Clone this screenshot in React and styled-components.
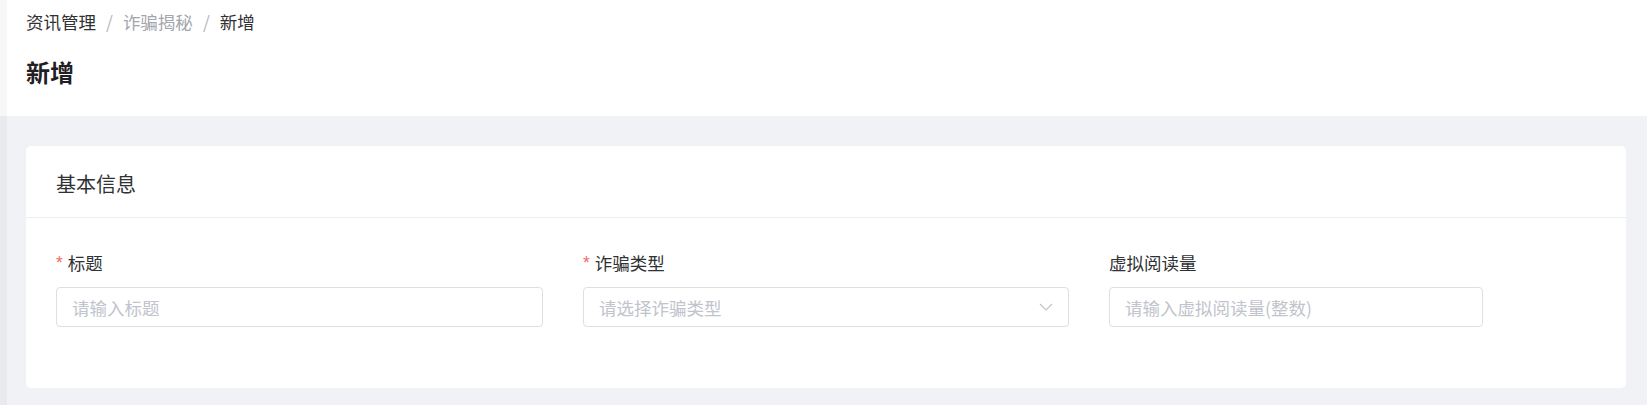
import React from "react";
import styled, { createGlobalStyle } from "styled-components";

const GlobalStyle = createGlobalStyle`
  html, body {
    margin: 0;
    padding: 0;
    background: #f0f2f5;
    font-family: "Noto Sans CJK SC", "Liberation Sans", sans-serif;
  }
  * {
    box-sizing: border-box;
  }
`;

const fields = [
  { label: "标题", required: true, placeholder: "请输入标题", width: 487 },
  { label: "诈骗类型", required: true, placeholder: "请选择诈骗类型", width: 486, select: true },
  { label: "虚拟阅读量", required: false, placeholder: "请输入虚拟阅读量(整数)", width: 374 },
];

const Page = styled.div`
  position: relative;
  min-height: 405px;
  background: #f0f2f5;

  &::before {
    content: "";
    position: absolute;
    left: 0;
    top: 0;
    bottom: 0;
    width: 7px;
    background: rgba(0, 0, 0, 0.03);
  }
`;

const Header = styled.div`
  background: #fff;
  height: 116px;
  padding: 10px 26px 0;
  display: flex;
  flex-direction: column;
  gap: 22px;
`;

const Crumbs = styled.div`
  display: flex;
  align-items: center;
  font-size: 17.5px;
  line-height: 24px;
`;

const Crumb = styled.span`
  color: ${(p) => (p.$muted ? "#a3a6ad" : "#303133")};
`;

const Sep = styled.span`
  color: #b4b7be;
  margin: 0 10px;
`;

const Title = styled.h1`
  margin: 0;
  font-size: 24px;
  line-height: 32px;
  font-weight: 700;
  color: #1f2023;
`;

const Body = styled.div`
  padding: 30px 21px 18px 26px;
`;

const Card = styled.div`
  background: #fff;
  border-radius: 5px;
`;

const CardHead = styled.div`
  height: 72px;
  padding: 3px 30px 0;
  display: flex;
  align-items: center;
  border-bottom: 1px solid #ebeef3;
  font-size: 20px;
  color: #303133;
`;

const FormRow = styled.div`
  display: flex;
  gap: 40px;
  padding: 33px 30px 61px;
`;

const Field = styled.div`
  width: ${(p) => p.$w}px;
  display: flex;
  flex-direction: column;
  gap: 12px;
`;

const Label = styled.label`
  display: flex;
  align-items: center;
  font-size: 17.5px;
  line-height: 24px;
  color: #303133;
`;

const Star = styled.span`
  color: #f56c6c;
  margin-right: 5px;
  font-family: "Liberation Sans", sans-serif;
`;

const Box = styled.div`
  height: 40px;
  border: 1px solid #dcdfe6;
  border-radius: 4px;
  padding: 0 15px;
  display: flex;
  align-items: center;
  justify-content: space-between;
  font-size: 17.5px;
  color: #c0c4cc;
`;

const Chevron = () => (
  <svg width="14" height="8" viewBox="0 0 14 8" fill="none">
    <path d="M1 1l6 6 6-6" stroke="#c0c4cc" strokeWidth="1.2" />
  </svg>
);

export default function App() {
  return (
    <>
      <GlobalStyle />
      <Page>
        <Header>
          <Crumbs>
            <Crumb>资讯管理</Crumb>
            <Sep>/</Sep>
            <Crumb $muted>诈骗揭秘</Crumb>
            <Sep>/</Sep>
            <Crumb>新增</Crumb>
          </Crumbs>
          <Title>新增</Title>
        </Header>
        <Body>
          <Card>
            <CardHead>基本信息</CardHead>
            <FormRow>
              {fields.map((f) => (
                <Field key={f.label} $w={f.width}>
                  <Label>
                    {f.required && <Star>*</Star>}
                    {f.label}
                  </Label>
                  <Box>
                    <span>{f.placeholder}</span>
                    {f.select && <Chevron />}
                  </Box>
                </Field>
              ))}
            </FormRow>
          </Card>
        </Body>
      </Page>
    </>
  );
}
